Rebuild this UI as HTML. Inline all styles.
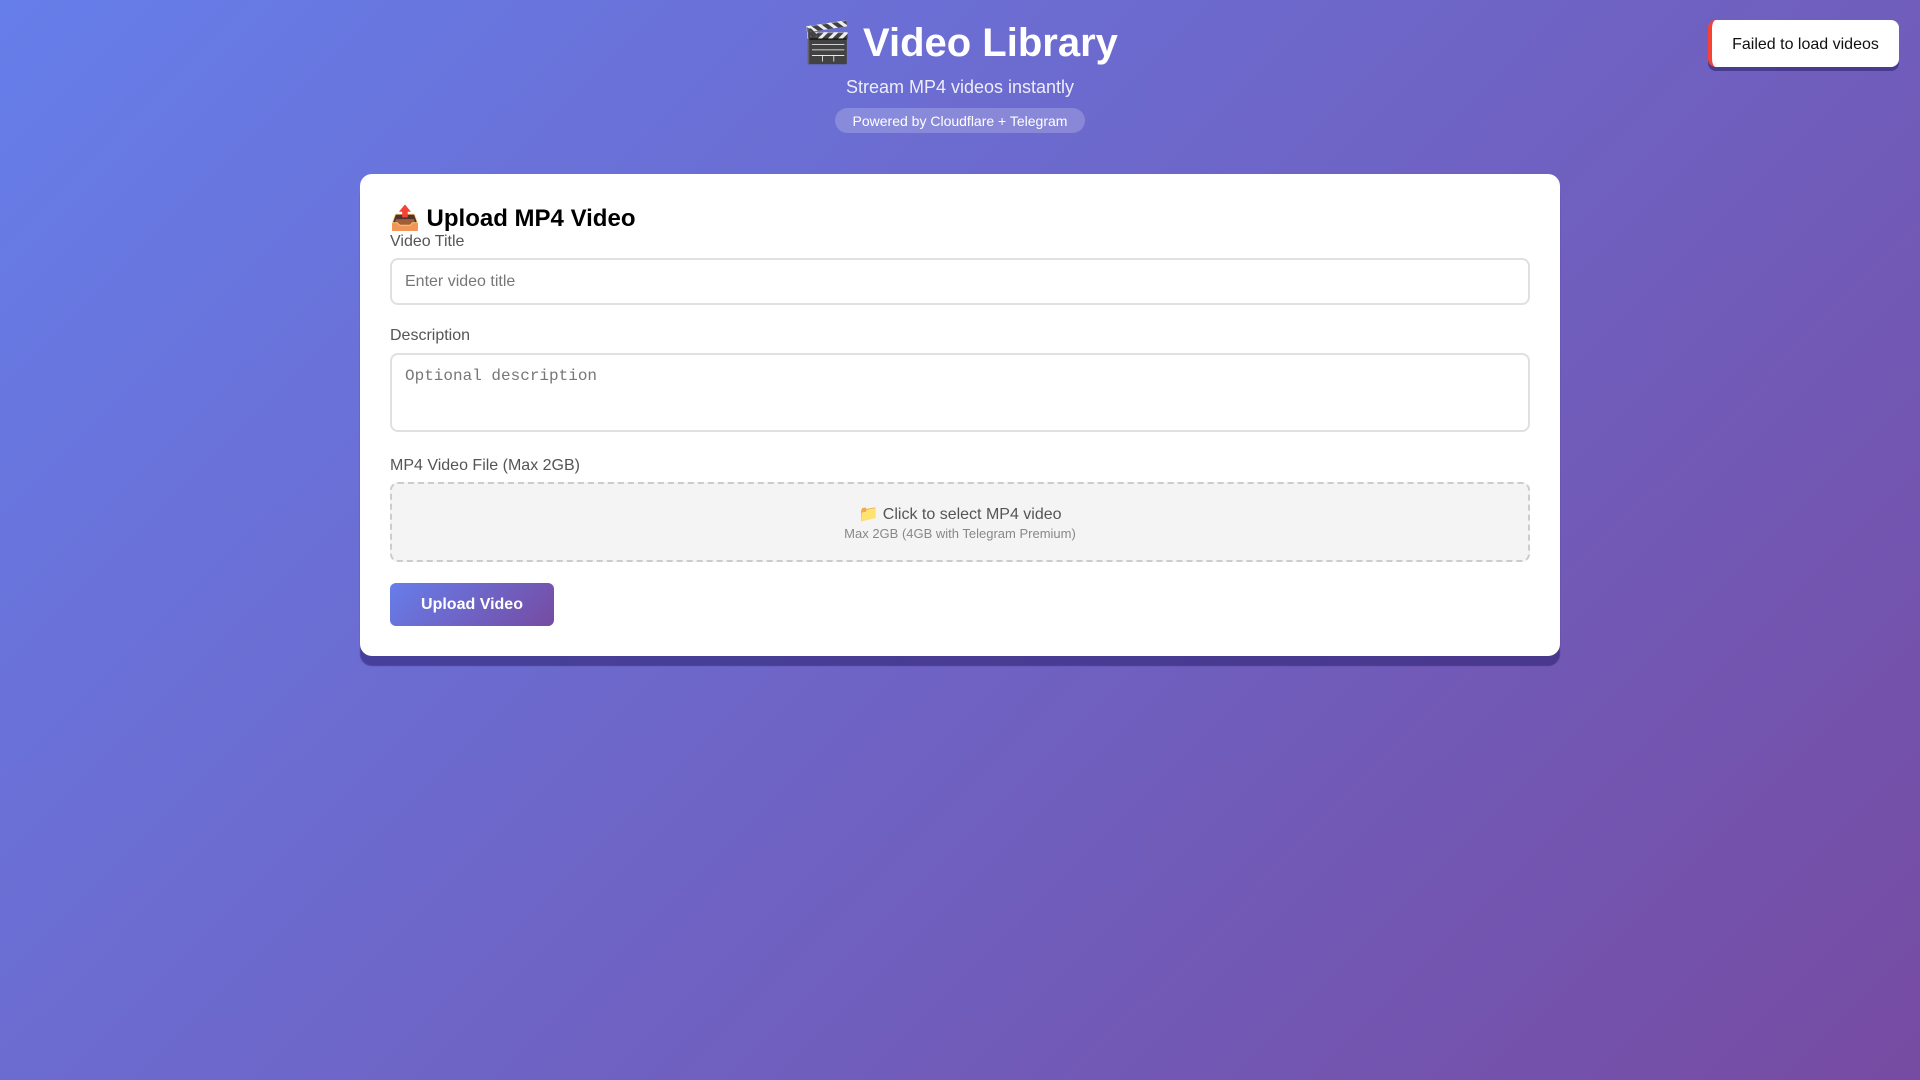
<!DOCTYPE html>
<html><head><meta charset="utf-8"><style>
*{box-sizing:border-box;margin:0;padding:0}
html,body{width:1920px;height:1080px;overflow:hidden}
body{background:linear-gradient(135deg,#667eea 0%,#764ba2 100%);font-family:"Liberation Sans","Noto Sans CJK SC",sans-serif;position:relative}
.h1{position:absolute;left:0;width:1920px;top:18px;text-align:center;color:#fff;font-size:40px;font-weight:bold;line-height:50px}
.sub{position:absolute;left:0;width:1920px;top:76px;text-align:center;color:rgba(255,255,255,.88);font-size:18px;line-height:22px}
.badge{position:absolute;left:835px;top:108px;width:250px;height:25px;border-radius:13px;background:rgba(255,255,255,.2);color:#fff;font-size:14px;line-height:26px;text-align:center}
.toast{position:absolute;left:1708px;top:20px;width:191px;height:47px;background:#fff;border-left:4px solid #f44336;border-radius:8px;box-shadow:0 4px 0 rgba(40,30,110,.55);font-size:16px;line-height:49px;text-align:center;color:#111}
.card{position:absolute;left:360px;top:174px;width:1200px;height:482px;background:#fff;border-radius:12px;box-shadow:0 10px 1px rgba(40,30,110,.55)}
.h2{position:absolute;left:30px;top:29px;font-size:24px;font-weight:bold;line-height:32px;color:#000}
.lbl{position:absolute;left:30px;font-size:16px;color:#555;line-height:20px}
.inp{position:absolute;left:30px;width:1140px;border:2px solid #e0e0e0;border-radius:8px;color:#777;font-size:16px;padding-left:13px}
.drop{position:absolute;left:30px;top:308px;width:1140px;height:80px;border:2px dashed #ccc;border-radius:8px;background:#f4f4f4;text-align:center}
.btn{position:absolute;left:30px;top:409px;width:164px;height:43px;border-radius:6px;background:linear-gradient(135deg,#667eea,#764ba2);color:#fff;font-weight:bold;font-size:16px;line-height:44px;text-align:center}
</style></head><body>
<div class="h1">🎬 Video Library</div>
<div class="sub">Stream MP4 videos instantly</div>
<div class="badge">Powered by Cloudflare + Telegram</div>
<div class="toast">Failed to load videos</div>
<div class="card">
<div class="h2">📤 Upload MP4 Video</div>
<div class="lbl" style="top:58px">Video Title</div>
<div class="inp" style="top:84px;height:47px;line-height:43px">Enter video title</div>
<div class="lbl" style="top:152px">Description</div>
<div class="inp" style="top:179px;height:79px;padding-top:11px;font-family:'Liberation Mono',monospace;line-height:20px">Optional description</div>
<div class="lbl" style="top:282px">MP4 Video File (Max 2GB)</div>
<div class="drop"><div style="margin-top:21px;font-size:16px;color:#555;line-height:20px">📁 Click to select MP4 video</div><div style="font-size:13px;color:#888;line-height:17px;margin-top:0">Max 2GB (4GB with Telegram Premium)</div></div>
<div class="btn">Upload Video</div>
</div>
</body></html>
